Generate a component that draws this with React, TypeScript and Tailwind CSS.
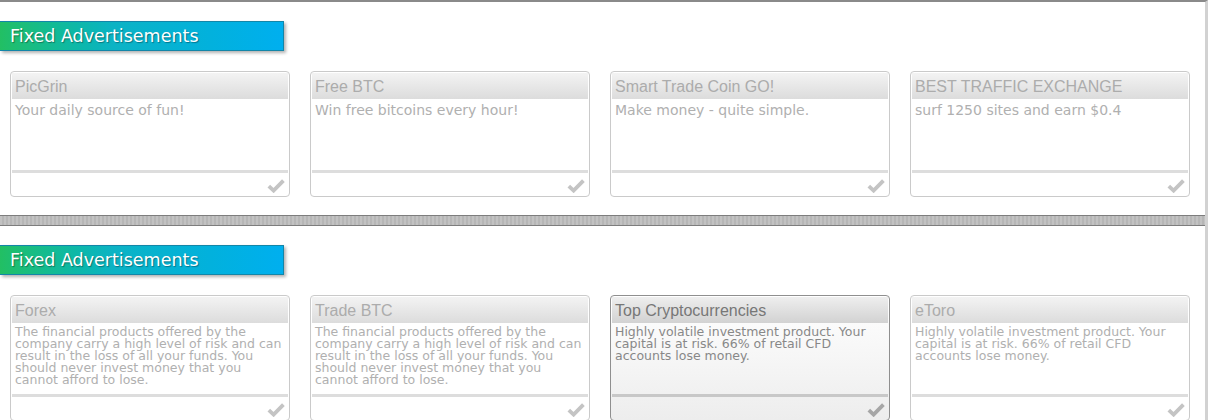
const rowOne = [
  { title: "PicGrin", text: "Your daily source of fun!" },
  { title: "Free BTC", text: "Win free bitcoins every hour!" },
  { title: "Smart Trade Coin GO!", text: "Make money - quite simple." },
  { title: "BEST TRAFFIC EXCHANGE", text: "surf 1250 sites and earn $0.4" },
];

const riskText =
  "The financial products offered by the company carry a high level of risk and can result in the loss of all your funds. You should never invest money that you cannot afford to lose.";
const cfdText =
  "Highly volatile investment product. Your capital is at risk. 66% of retail CFD accounts lose money.";

const rowTwo = [
  { title: "Forex", text: riskText, small: true },
  { title: "Trade BTC", text: riskText, small: true },
  { title: "Top Cryptocurrencies", text: cfdText, small: true, active: true },
  { title: "eToro", text: cfdText, small: true },
];

type Ad = { title: string; text: string; small?: boolean; active?: boolean };

function Check({ active }: { active?: boolean }) {
  return (
    <svg width="18" height="15" viewBox="0 0 18 15">
      <path
        d="M1.8 8.2 L6.6 12.6 L16.4 2.6"
        fill="none"
        stroke={active ? "#a6a6a6" : "#c4c4c4"}
        strokeWidth="3.8"
        strokeLinejoin="miter"
      />
    </svg>
  );
}

function AdCard({ title, text, small, active }: Ad) {
  return (
    <div
      className={
        "w-[280px] h-[126px] rounded-[4px] border p-[1px] flex flex-col " +
        (active
          ? "border-[#8f8f8f] bg-gradient-to-b from-white to-[#ededed]"
          : "border-[#cacaca] bg-white")
      }
    >
      <div
        className={
          "h-[26px] px-[3px] font-['Liberation_Sans',Arial,sans-serif] text-[16px] leading-[27px] whitespace-nowrap bg-gradient-to-b " +
          (active
            ? "from-[#eeeeee] to-[#d2d2d2] text-[#777777]"
            : "from-[#f3f3f3] to-[#dcdcdc] text-[#acacac]")
        }
      >
        {title}
      </div>
      <div
        className={
          "h-[71px] px-[3px] " +
          (small ? "pt-[3px] text-[12.5px] leading-[12px] " : "pt-[3px] text-[14px] leading-[17px] ") +
          (active ? "text-[#888888]" : "text-[#b0b0b0]")
        }
      >
        {text}
      </div>
      <div className={"h-[3px] " + (active ? "bg-[#c8c8c8]" : "bg-[#dddddd]")} />
      <div className="flex-1 flex justify-end items-end pr-[3px] pb-[2px]">
        <Check active={active} />
      </div>
    </div>
  );
}

function Header() {
  return (
    <div className="w-[284px] h-[30px] border border-l-0 border-[#1386a8] bg-gradient-to-r from-[#22bf63] via-[#0cb3c4] via-40% to-[#00afef] shadow-[2px_2px_3px_rgba(0,0,0,0.3)] pl-[10px] text-[17.5px] leading-[29px] text-white [text-shadow:1px_1px_1px_rgba(0,0,0,0.35)]">
      Fixed Advertisements
    </div>
  );
}

function Section({ ads }: { ads: Ad[] }) {
  return (
    <section className="pt-[19px] pb-[18px]">
      <Header />
      <div className="flex gap-[20px] pl-[10px] mt-[20px]">
        {ads.map((ad) => (
          <AdCard key={ad.title} {...ad} />
        ))}
      </div>
    </section>
  );
}

export default function App() {
  return (
    <div
      className="w-[1208px] h-[420px] overflow-hidden bg-white"
      style={{ fontFamily: '"DejaVu Sans", Verdana, sans-serif' }}
    >
      <div className="w-[1208px] min-h-[420px] border-t-2 border-t-[#8a8a8a] border-r-[3px] border-r-[#d2d2d2]">
        <Section ads={rowOne} />
        <div className="h-[11px] border-y border-[#7d7d7d] bg-[repeating-linear-gradient(90deg,#c2c2c2_0px,#c2c2c2_2px,#b6b6b6_2px,#b6b6b6_4px)]" />
        <Section ads={rowTwo} />
      </div>
    </div>
  );
}
